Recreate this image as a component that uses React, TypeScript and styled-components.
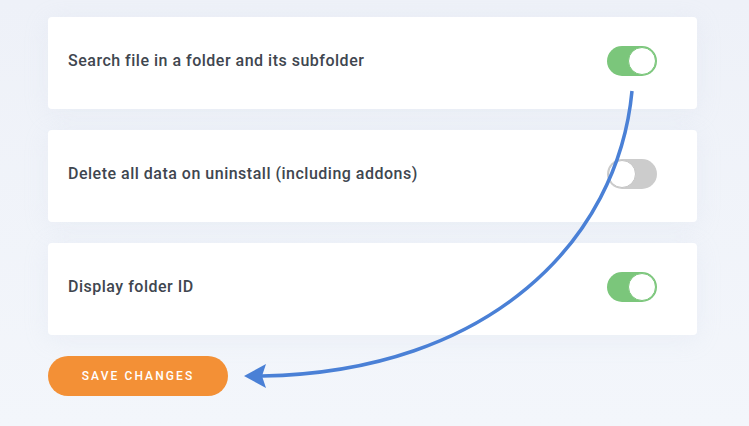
import React, { useState } from "react";
import styled, { createGlobalStyle } from "styled-components";

const GlobalStyle = createGlobalStyle`
  html, body {
    margin: 0;
    padding: 0;
    background: #f0f3f9;
  }
  body {
    font-family: "Roboto", "Liberation Sans", sans-serif;
  }
`;

const Page = styled.div`
  position: relative;
  width: 749px;
  height: 426px;
  overflow: hidden;
  background: linear-gradient(180deg, #eef1f8 0%, #f3f6fb 100%);
`;

const List = styled.div`
  display: flex;
  flex-direction: column;
  gap: 21px;
  padding: 17px 52px 0 48px;
`;

const Card = styled.div`
  display: flex;
  align-items: center;
  justify-content: space-between;
  height: 92px;
  box-sizing: border-box;
  padding: 0 40px 5px 20px;
  background: #ffffff;
  border-radius: 4px;
  box-shadow: 0 4px 24px rgba(200, 208, 228, 0.18);
`;

const Label = styled.span`
  font-size: 16px;
  font-weight: 500;
  color: #40464f;
  letter-spacing: 0.5px;
`;

const Track = styled.button<{ on: boolean }>`
  position: relative;
  width: 50px;
  height: 30px;
  padding: 0;
  border: none;
  border-radius: 15px;
  cursor: pointer;
  background: ${({ on }) => (on ? "#7bc67b" : "#cccccc")};
`;

const Knob = styled.span<{ on: boolean }>`
  position: absolute;
  top: 1px;
  left: ${({ on }) => (on ? "21px" : "1px")};
  width: 28px;
  height: 28px;
  box-sizing: border-box;
  border-radius: 50%;
  background: #ffffff;
  border: 1px solid ${({ on }) => (on ? "#7bc67b" : "#c4c4c4")};
`;

const Footer = styled.div`
  padding: 21px 0 0 48px;
`;

const SaveButton = styled.button`
  width: 180px;
  height: 40px;
  border: none;
  border-radius: 20px;
  background: #f39036;
  color: #ffffff;
  font-family: "Roboto", "Liberation Sans", sans-serif;
  font-size: 12px;
  font-weight: 500;
  letter-spacing: 2.1px;
  text-transform: uppercase;
  cursor: pointer;
`;

const Overlay = styled.svg`
  position: absolute;
  left: 0;
  top: 0;
  pointer-events: none;
`;

const settings = [
  { label: "Search file in a folder and its subfolder", on: true },
  { label: "Delete all data on uninstall (including addons)", on: false },
  { label: "Display folder ID", on: true },
];

const Toggle = ({ initial }: { initial: boolean }) => {
  const [on, setOn] = useState(initial);
  return (
    <Track on={on} onClick={() => setOn(!on)}>
      <Knob on={on} />
    </Track>
  );
};

const App = () => {
  return (
    <Page>
      <GlobalStyle />
      <List>
        {settings.map((s) => (
          <Card key={s.label}>
            <Label>{s.label}</Label>
            <Toggle initial={s.on} />
          </Card>
        ))}
      </List>
      <Footer>
        <SaveButton>Save changes</SaveButton>
      </Footer>
      <Overlay width="749" height="426" viewBox="0 0 749 426">
        <path
          d="M632 91 C 618 240 490 372 262 376"
          fill="none"
          stroke="#4a80d6"
          strokeWidth="3.5"
        />
        <path d="M244 376 L266 364 L262 376 L266 388 Z" fill="#4a80d6" />
      </Overlay>
    </Page>
  );
};

export default App;
